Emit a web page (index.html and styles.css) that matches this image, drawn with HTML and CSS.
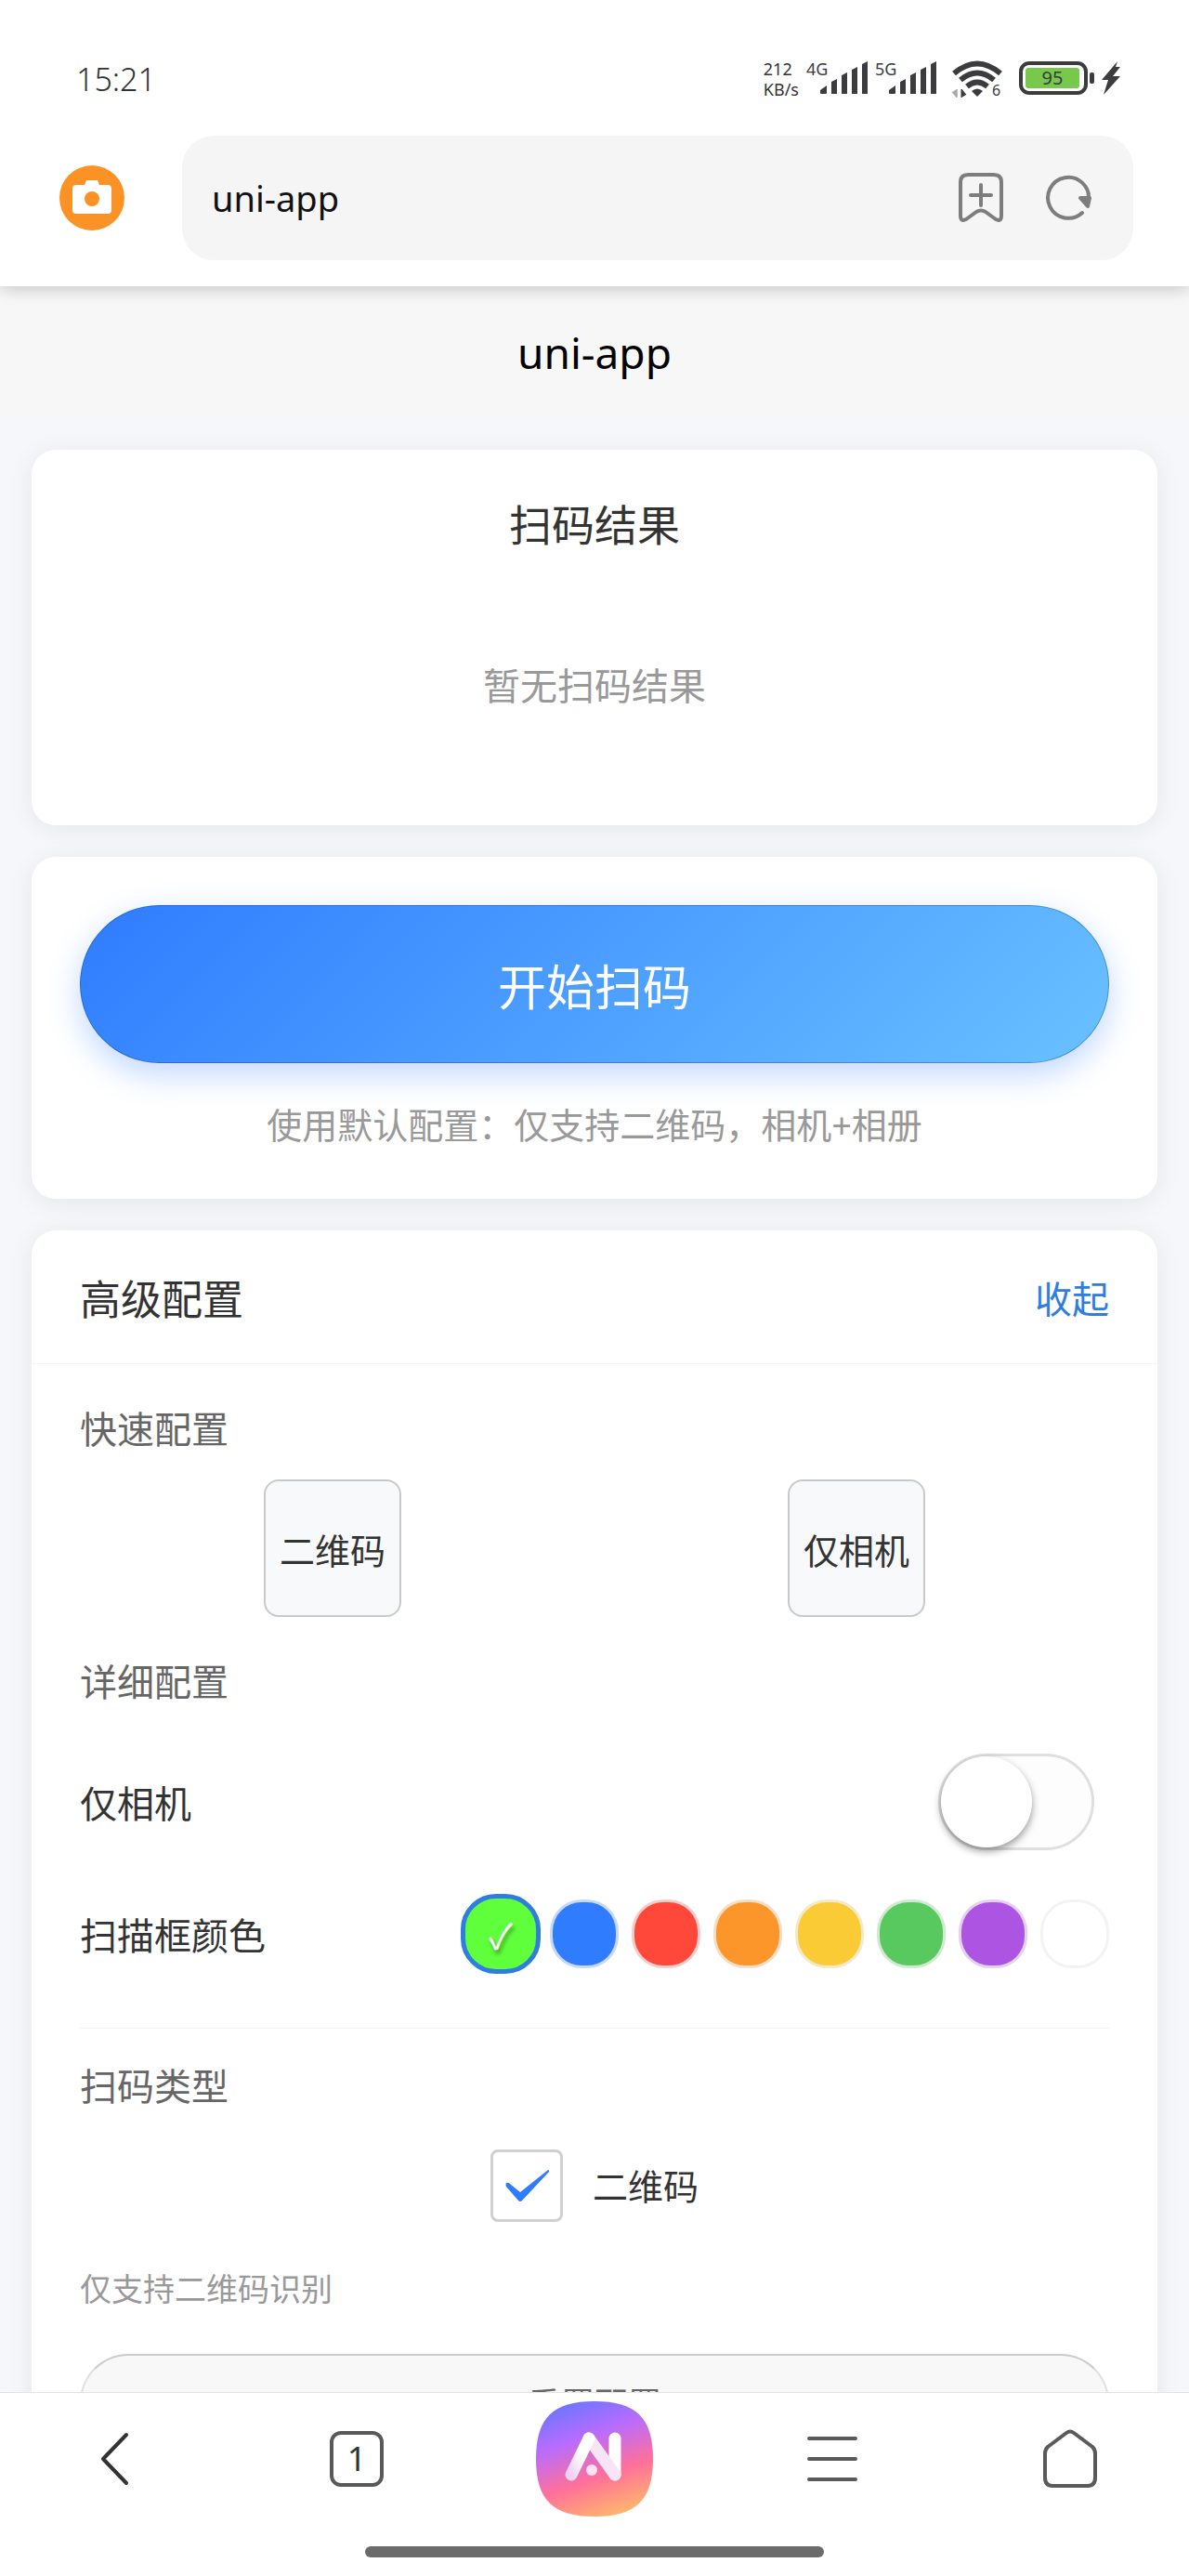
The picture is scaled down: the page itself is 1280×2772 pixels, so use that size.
FILE: index.html
```html
<!DOCTYPE html>
<html lang="zh-CN">
<head>
    <meta charset="UTF-8">
    <meta name="viewport" content="width=device-width, initial-scale=1.0">
    <title>uni-app</title>
    <link rel="stylesheet" href="styles.css">
</head>
<body>

    <header class="browser-top">
        <!-- 状态栏 -->
        <div class="status-bar">
            <span class="time">15:21</span>
            <div class="status-icons">
                <span class="net-speed">212<br>KB/s</span>
                <svg class="signal" width="70" height="44" viewBox="0 0 70 44">
                    <text x="0" y="18">4G</text>
                    <path d="M15 37v-3l7-5v8a1 1 0 0 1-1 1h-5a1 1 0 0 1-1-1zM27 25l6-3v16h-6zM38 18l6-3v23h-6zM49 12l6-3v29h-6zM60 6l6-3v35h-6z"/>
                </svg>
                <svg class="signal" width="70" height="44" viewBox="0 0 70 44">
                    <text x="0" y="18">5G</text>
                    <path d="M15 37v-3l7-5v8a1 1 0 0 1-1 1h-5a1 1 0 0 1-1-1zM27 25l6-3v16h-6zM38 18l6-3v23h-6zM49 12l6-3v29h-6zM60 6l6-3v35h-6z"/>
                </svg>
                <svg class="wifi" width="56" height="44" viewBox="0 0 56 44">
                    <path class="arc" d="M3 16Q28-5 53 16M10 23Q28 8 46 23M17 30Q28 21 39 30"/>
                    <path d="M22 35q6-5 12 0l-6 6z"/>
                    <path class="down" d="M6 33v9l-5-6M6 33v8"/>
                    <path class="up" d="M11 42v-9l5 6"/>
                    <text x="44" y="40">6</text>
                </svg>
                <svg class="battery" width="112" height="44" viewBox="0 0 112 44">
                    <rect class="shell" x="3" y="5" width="70" height="32" rx="9"/>
                    <rect class="charge" x="8" y="10" width="58" height="22" rx="3"/>
                    <rect x="77" y="15" width="5" height="12" rx="2"/>
                    <path d="M107 3 90 23h7l-5 16 18-20h-8l8-10h-5z"/>
                    <text x="37" y="28">95</text>
                </svg>
            </div>
        </div>

        <!-- 地址栏 -->
        <div class="address-row">
            <button class="camera" type="button" aria-label="相机">
                <svg width="70" height="70" viewBox="0 0 70 70">
                    <circle cx="35" cy="35" r="35" fill="#fa9226"/>
                    <path d="M18 21h9l2-5h12l2 5h9a4 4 0 0 1 4 4v23a4 4 0 0 1-4 4H18a4 4 0 0 1-4-4V25a4 4 0 0 1 4-4z" fill="#fff"/>
                    <circle cx="35" cy="36" r="8" fill="#fa9226"/>
                </svg>
            </button>
            <div class="address">
                <input class="address-input" type="text" value="uni-app" aria-label="地址">
                <button type="button" aria-label="收藏">
                    <svg width="48" height="56" viewBox="0 0 48 56" class="tool-icon">
                        <path d="M10 3h28q8 0 8 8v36q0 7-6 4l-11-8q-5-3-10 0L8 51q-6 3-6-4V11q0-8 8-8zM24 14v22M13 25h22"/>
                    </svg>
                </button>
                <button type="button" aria-label="刷新">
                    <svg width="52" height="56" viewBox="0 0 52 56" class="tool-icon">
                        <path d="M41 44A22 22 0 1 1 48 30"/>
                        <path d="m39 28 8 9 2-9z" fill="#7d7d7d"/>
                    </svg>
                </button>
            </div>
        </div>
    </header>

    <h1 class="page-title">uni-app</h1>

    <main class="content">
        <!-- 扫码结果 -->
        <section class="card result-card">
            <h2>扫码结果</h2>
            <p class="empty">暂无扫码结果</p>
        </section>

        <!-- 开始扫码 -->
        <section class="card scan-card">
            <button class="scan-button" type="button">开始扫码</button>
            <p class="scan-hint">使用默认配置：仅支持二维码，相机+相册</p>
        </section>

        <!-- 高级配置 -->
        <section class="card config-card">
            <div class="config-header">
                <h2>高级配置</h2>
                <button class="toggle-link" type="button">收起</button>
            </div>
            <div class="config-body">
                <h3>快速配置</h3>
                <div class="quick">
                    <button type="button">二维码</button>
                    <button type="button">仅相机</button>
                </div>

                <h3>详细配置</h3>
                <div class="details">
                    <div class="row">
                        <label for="onlyCamera">仅相机</label>
                        <input class="switch" type="checkbox" id="onlyCamera">
                    </div>
                    <div class="row">
                        <span id="colorLabel">扫描框颜色</span>
                        <div class="colors" role="radiogroup" aria-labelledby="colorLabel">
                            <input type="radio" name="color" class="lime" aria-label="亮绿" checked>
                            <input type="radio" name="color" class="blue" aria-label="蓝">
                            <input type="radio" name="color" class="red" aria-label="红">
                            <input type="radio" name="color" class="orange" aria-label="橙">
                            <input type="radio" name="color" class="yellow" aria-label="黄">
                            <input type="radio" name="color" class="green" aria-label="绿">
                            <input type="radio" name="color" class="purple" aria-label="紫">
                            <input type="radio" name="color" class="white" aria-label="白">
                        </div>
                    </div>
                </div>

                <h3>扫码类型</h3>
                <label class="type-option">
                    <span class="check">
                        <input type="checkbox" checked>
                        <svg width="48" height="36" viewBox="0 0 48 36"><path d="M2 15q2-1 4 1l11 9L47 1q2 0 1 2L19 34q-2 2-4 0L2 19q-1-2 0-4z"/></svg>
                    </span>
                    二维码
                </label>
                <p class="type-hint">仅支持二维码识别</p>
                <button class="reset-button" type="button">重置配置</button>
            </div>
        </section>
    </main>

    <!-- 底部导航 -->
    <footer class="browser-bottom">
        <nav class="nav">
            <button type="button" aria-label="返回">
                <svg width="60" height="64" viewBox="0 0 60 64" class="nav-icon"><path d="M38 6 13 32l25 26"/></svg>
            </button>
            <button class="tabs" type="button" aria-label="标签页"><span>1</span></button>
            <button type="button" aria-label="AI">
                <svg width="126" height="124" viewBox="0 0 126 124">
                    <defs>
                        <linearGradient id="aiBg" x1="0.25" y1="0" x2="0.6" y2="1">
                            <stop offset="0" stop-color="#6877ff"/>
                            <stop offset="0.32" stop-color="#b76cff"/>
                            <stop offset="0.68" stop-color="#ff709a"/>
                            <stop offset="1" stop-color="#ffb26e"/>
                        </linearGradient>
                        <linearGradient id="aiLeg" x1="0" y1="1" x2="1" y2="0">
                            <stop offset="0" stop-color="#efd2f2"/>
                            <stop offset="0.6" stop-color="#fff"/>
                        </linearGradient>
                    </defs>
                    <path d="M63 0C108 0 126 18 126 62s-18 62-63 62S0 106 0 62 18 0 63 0z" fill="url(#aiBg)"/>
                    <g fill="none" stroke-width="13" stroke-linecap="round" stroke-linejoin="round">
                        <path d="M85 79V40" stroke="#fff"/>
                        <path d="M57 40 85 79" stroke="#f7e4f4"/>
                        <path d="M38 79 57 40" stroke="url(#aiLeg)"/>
                    </g>
                    <circle cx="60" cy="74" r="6" fill="#fbe3f2"/>
                </svg>
            </button>
            <button type="button" aria-label="菜单">
                <svg width="60" height="64" viewBox="0 0 60 64" class="nav-icon menu"><path d="M5 10h50M5 32h50M5 54h50"/></svg>
            </button>
            <button type="button" aria-label="主页">
                <svg width="60" height="64" viewBox="0 0 60 64" class="nav-icon home"><path d="M26 4q4-3 8 0l20 15q3 3 3 7v26q0 9-8 9H11q-8 0-8-9V26q0-4 3-7z"/></svg>
            </button>
        </nav>
        <div class="home-indicator"></div>
    </footer>

</body>
</html>
```
FILE: styles.css
```css
* {
    box-sizing: border-box;
}
body {
    display: flex;
    flex-direction: column;
    height: 100vh;
    margin: 0;
    overflow: hidden;
    background-color: #f5f7fb;
    color: #333;
    font-family: "Noto Sans", "Noto Sans CJK SC", sans-serif;
    font-size: 40px;
    font-weight: 400;
}
h1, h2, h3, p {
    margin: 0;
    font-weight: 400;
}
button {
    padding: 0;
    border: none;
    background: none;
    color: inherit;
    font: inherit;
    cursor: pointer;
}
svg {
    display: block;
}

/* 顶部 */
.browser-top {
    position: relative;
    flex: none;
    background-color: #fff;
    box-shadow: 0 4px 16px rgba(0, 0, 0, 0.18);
}
.status-bar {
    display: flex;
    align-items: center;
    justify-content: space-between;
    height: 128px;
    padding: 42px 72px 0 82px;
}
.time {
    font-size: 34px;
    font-weight: 300;
}
.status-icons {
    display: flex;
    align-items: center;
    gap: 4px;
    fill: #3c3c3e;
}
.net-speed {
    margin-right: 4px;
    font-size: 18px;
    line-height: 22px;
}
.signal text {
    font-size: 18px;
}
.wifi {
    margin: 0 12px 0 8px;
}
.wifi text {
    font-size: 16px;
}
.wifi .arc {
    fill: none;
    stroke: #3c3c3e;
    stroke-width: 6px;
}
.wifi .down {
    fill: #aaa;
    stroke: #aaa;
}
.wifi .up {
    stroke: #3c3c3e;
}
.battery .shell {
    fill: none;
    stroke: #3c3c3e;
    stroke-width: 4px;
}
.battery .charge {
    fill: #76c94b;
}
.battery text {
    font-size: 20px;
    text-anchor: middle;
}
.address-row {
    display: flex;
    align-items: center;
    gap: 62px;
    padding: 18px 60px 28px 64px;
}
.address {
    display: flex;
    flex: 1;
    align-items: center;
    gap: 44px;
    height: 134px;
    padding: 0 44px 0 32px;
    border-radius: 34px;
    background-color: #f5f5f5;
}
.address-input {
    flex: 1;
    min-width: 0;
    padding: 0;
    border: none;
    outline: none;
    background: none;
    color: #111;
    font: inherit;
    font-size: 38px;
}
.tool-icon {
    fill: none;
    stroke: #7d7d7d;
    stroke-width: 4px;
    stroke-linecap: round;
    stroke-linejoin: round;
}
.page-title {
    flex: none;
    padding-top: 4px;
    background-color: #f7f7f7;
    color: #000;
    font-size: 46px;
    line-height: 134px;
    text-align: center;
}

/* 内容 */
.content {
    display: flex;
    flex: 1;
    flex-direction: column;
    gap: 34px;
    min-height: 0;
    padding: 38px 34px 0;
    overflow: hidden;
}
.card {
    flex: none;
    border-radius: 26px;
    background-color: #fff;
    box-shadow: 0 4px 28px rgba(0, 0, 0, 0.07);
}
.result-card {
    padding: 48px 52px 52px;
    text-align: center;
}
.result-card h2 {
    font-size: 46px;
    line-height: 64px;
}
.empty {
    padding: 114px 0 70px;
    color: #999;
    line-height: 56px;
}
.scan-card {
    padding: 52px 52px 54px;
    text-align: center;
}
.scan-button {
    width: 100%;
    height: 170px;
    border: 1px solid rgba(0, 60, 120, 0.35);
    border-radius: 85px;
    background: linear-gradient(135deg, #2f7cff, #69c1ff) border-box;
    box-shadow: 0 12px 34px rgba(47, 124, 255, 0.3);
    color: #fff;
    font-size: 52px;
}
.scan-hint {
    margin-top: 40px;
    color: #999;
    font-size: 38px;
    line-height: 52px;
}
.config-header {
    display: flex;
    align-items: center;
    justify-content: space-between;
    height: 144px;
    padding: 0 52px;
    border-bottom: 1px solid #f5f5f5;
}
.config-header h2 {
    font-size: 44px;
}
.toggle-link {
    color: #2f7de1;
}
.config-body {
    padding: 42px 52px 52px;
}
h3 {
    color: #666;
    font-size: 40px;
    line-height: 56px;
}
.quick {
    display: grid;
    grid-template-columns: 1fr 1fr;
    justify-items: center;
    gap: 20px;
    margin: 26px 0 42px;
}
.quick button {
    width: 148px;
    height: 148px;
    border: 2px solid #c8c9ca;
    border-radius: 16px;
    background-color: #f8f9fb;
    font-size: 38px;
}
.details {
    margin: 30px 0 34px;
    padding-bottom: 30px;
    border-bottom: 1px solid #f0f0f0;
}
.row {
    display: flex;
    align-items: center;
    justify-content: space-between;
    height: 142px;
}
.switch {
    display: flex;
    appearance: none;
    width: 168px;
    height: 104px;
    margin: 0 16px 0 0;
    border: 3px solid #dfdfdf;
    border-radius: 52px;
    background-color: #fdfdfd;
}
.switch::before {
    content: "";
    width: 98px;
    height: 98px;
    border-radius: 50%;
    background-color: #fff;
    box-shadow: 0 4px 8px rgba(0, 0, 0, 0.4);
}
.colors {
    display: flex;
    align-items: center;
    gap: 14px;
}
.colors input {
    appearance: none;
    width: 74px;
    height: 74px;
    margin: 0;
    border: 3px solid rgba(240, 240, 240, 0.8);
    border-radius: 34px;
}
.colors input:checked {
    display: grid;
    place-items: center;
    width: 86px;
    height: 86px;
    margin-right: -4px;
    border: 5px solid #2f7de1;
    border-radius: 38px;
}
.colors input:checked::before {
    content: "✓";
    color: #fff;
    font-size: 38px;
    text-shadow: 2px 4px 4px rgba(0, 0, 0, 0.4);
}
.lime { background-color: #60ff3b; }
.blue { background-color: #2f7cff; }
.red { background-color: #ff4839; }
.orange { background-color: #fc962b; }
.yellow { background-color: #facb35; }
.green { background-color: #58c95e; }
.purple { background-color: #ad54e2; }
.white { background-color: #fff; }

.type-option {
    display: flex;
    align-items: center;
    justify-content: center;
    gap: 32px;
    margin-top: 40px;
    font-size: 38px;
    line-height: 78px;
}
.check {
    display: grid;
    place-items: center;
}
.check input, .check svg {
    grid-area: 1 / 1;
}
.check input {
    appearance: none;
    width: 78px;
    height: 78px;
    margin: 0;
    border: 3px solid #d0d0d0;
    border-radius: 8px;
}
.check svg {
    fill: #2f7cff;
}
.type-hint {
    margin: 48px 0 46px;
    color: #999;
    font-size: 34px;
    line-height: 48px;
}
.reset-button {
    width: 100%;
    height: 104px;
    border: 2px solid #e0e0e0;
    border-top-color: #ccc;
    border-radius: 52px;
    background-color: #f8f8f9;
    color: #666;
    font-size: 36px;
}

/* 底部 */
.browser-bottom {
    position: relative;
    flex: none;
    height: 198px;
    border-top: 1px solid #e4e4e6;
    background-color: #fff;
}
.nav {
    display: grid;
    grid-template-columns: repeat(5, 1fr);
    align-items: center;
    justify-items: center;
    height: 142px;
}
.nav-icon {
    fill: none;
    stroke: #333;
    stroke-width: 4px;
    stroke-linecap: round;
    stroke-linejoin: round;
}
.menu, .home {
    stroke: #5a5a5a;
}
.tabs {
    width: 58px;
    height: 60px;
    border: 4px solid #5a5a5a;
    border-radius: 12px;
    font-size: 36px;
    line-height: 52px;
}
.home-indicator {
    width: 494px;
    max-width: 60%;
    height: 12px;
    margin: 23px auto 0;
    border-radius: 6px;
    background-color: #6b6b6b;
}
```
